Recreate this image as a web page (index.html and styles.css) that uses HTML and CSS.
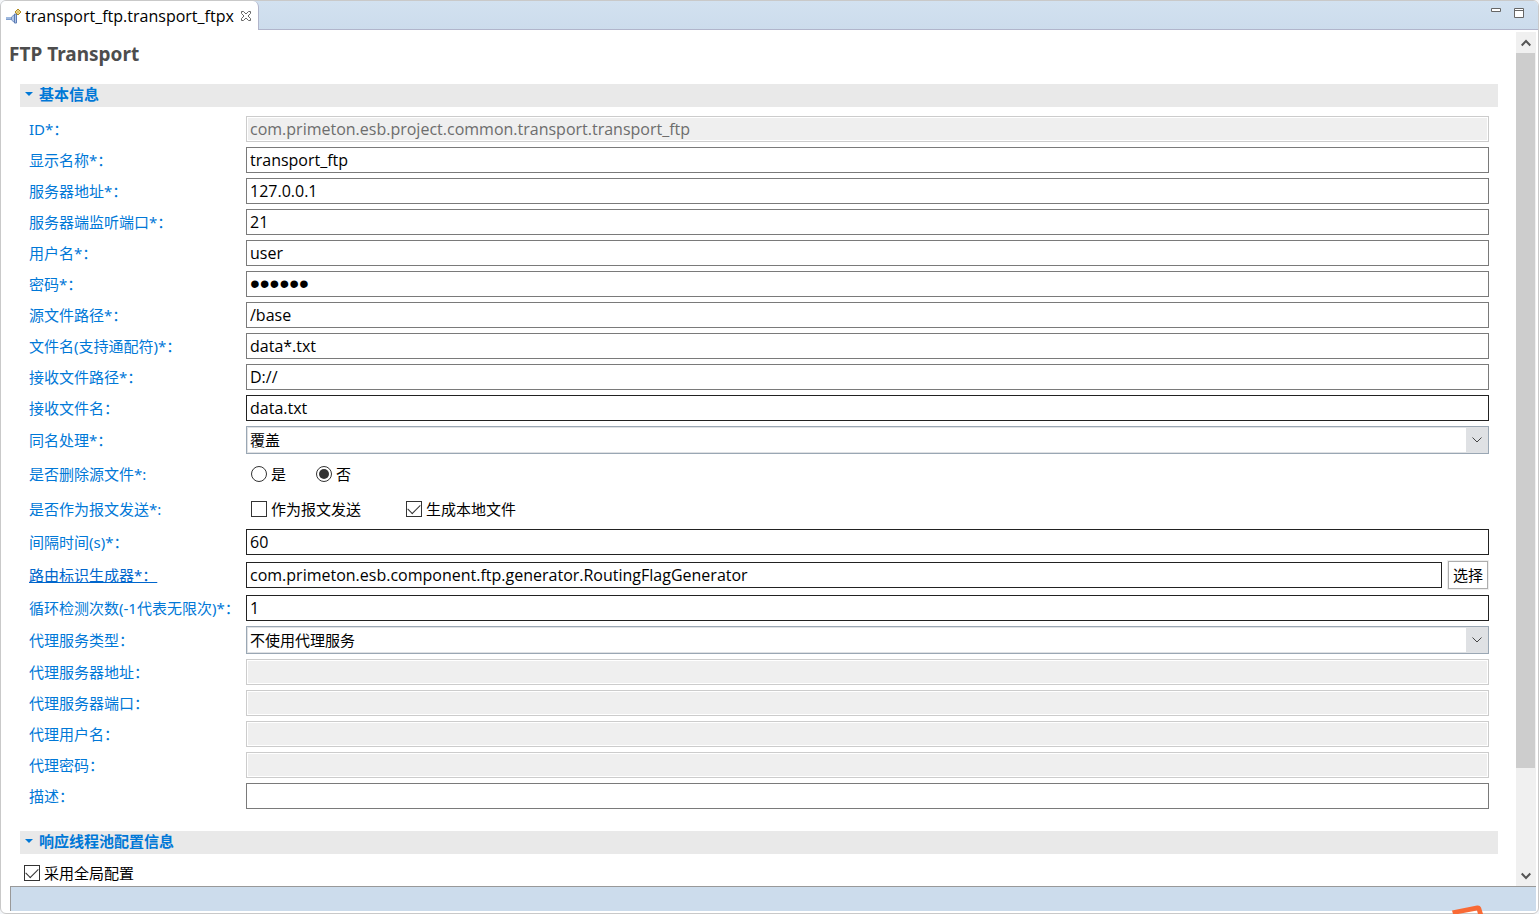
FILE: index.html
```
<!DOCTYPE html>
<html lang="zh-CN">
<head>
    <meta charset="UTF-8">
    <meta name="viewport" content="width=device-width, initial-scale=1.0">
    <title>transport_ftp.transport_ftpx</title>
    <link rel="stylesheet" href="styles.css">
</head>
<body>
    <div class="window">
        <div class="tab-bar">
            <div class="tab">
                <svg class="tab-icon" width="16" height="16" viewBox="0 0 16 16">
                    <path d="M0 9h6v3h-6z" fill="#7d9dce"/>
                    <path d="M0 10h7" stroke="#c4d5ee"/>
                    <path d="M5.500 9L8.500 6.500V14.500L5.500 12z" fill="#b4c8e8" stroke="#7390c2"/>
                    <path d="M8.500 6h2v9h-2z" fill="#b4c8e8" stroke="#5c7cb4"/>
                    <path d="M12 1L15 4L12 7L9 4z" fill="#fff3c0" stroke="#b08a20"/>
                    <path d="M12 2v4M10 4h4" stroke="#d5b652"/>
                </svg>
                <span class="tab-title">transport_ftp.transport_ftpx</span>
                <button class="icon-button" aria-label="关闭">
                    <svg width="12" height="12" viewBox="0 0 12 12">
                        <path d="M1.500 1.500h2L6 4l2.500-2.500h2v2L8 6l2.500 2.500v2h-2L6 8l-2.500 2.500h-2v-2L4 6L1.500 3.500z" fill="#fff" stroke="#666"/>
                    </svg>
                </button>
            </div>
            <div class="window-buttons">
                <button class="icon-button" aria-label="最小化">
                    <svg width="10" height="10" viewBox="0 0 10 10"><path d="M.5 .5h9v3h-9z" fill="#fff" stroke="#666"/></svg>
                </button>
                <button class="icon-button" aria-label="最大化">
                    <svg width="10" height="10" viewBox="0 0 10 10"><path d="M.5 .5h9v9h-9zM.5 2.500h9" fill="#fff" stroke="#666"/></svg>
                </button>
            </div>
        </div>

        <div class="editor">
            <main class="form-area">
                <h1>FTP Transport</h1>

                <h2 class="section-title"><svg width="8" height="4" viewBox="0 0 8 4"><path d="M0 0h8L4 4z" fill="#0078d7"/></svg>基本信息</h2>
                <form class="fields">
                    <label for="id">ID*：</label>
                    <input class="text" id="id" type="text" value="com.primeton.esb.project.common.transport.transport_ftp" disabled>

                    <label for="displayName">显示名称*：</label>
                    <input class="text" id="displayName" type="text" value="transport_ftp">

                    <label for="host">服务器地址*：</label>
                    <input class="text" id="host" type="text" value="127.0.0.1">

                    <label for="port">服务器端监听端口*：</label>
                    <input class="text" id="port" type="text" value="21">

                    <label for="user">用户名*：</label>
                    <input class="text" id="user" type="text" value="user">

                    <label for="password">密码*：</label>
                    <input class="text" id="password" type="password" value="000000">

                    <label for="sourcePath">源文件路径*：</label>
                    <input class="text" id="sourcePath" type="text" value="/base">

                    <label for="fileName">文件名(支持通配符)*：</label>
                    <input class="text" id="fileName" type="text" value="data*.txt">

                    <label for="receivePath">接收文件路径*：</label>
                    <input class="text" id="receivePath" type="text" value="D://">

                    <label for="receiveName">接收文件名：</label>
                    <input class="text dark" id="receiveName" type="text" value="data.txt">

                    <label for="sameName">同名处理*：</label>
                    <div class="combo">
                        <select id="sameName"><option>覆盖</option></select>
                        <span class="combo-arrow"><svg width="10" height="6" viewBox="0 0 10 6"><path d="M.5 .5L5 5L9.500 .5" fill="none" stroke="#444"/></svg></span>
                    </div>

                    <span class="row-label" id="deleteLabel">是否删除源文件*:</span>
                    <div class="options radios" role="radiogroup" aria-labelledby="deleteLabel">
                        <label><input type="radio" name="deleteSource">是</label>
                        <label><input type="radio" name="deleteSource" checked>否</label>
                    </div>

                    <span class="row-label" id="sendLabel">是否作为报文发送*:</span>
                    <div class="options checks" role="group" aria-labelledby="sendLabel">
                        <label><input type="checkbox">作为报文发送</label>
                        <label><input type="checkbox" checked>生成本地文件</label>
                    </div>

                    <label for="interval">间隔时间(s)*：</label>
                    <input class="text dark" id="interval" type="text" value="60">

                    <a class="row-link" id="routingLabel" href="#routing">路由标识生成器*：</a>
                    <div class="picker">
                        <input class="text dark" id="routing" type="text" aria-labelledby="routingLabel" value="com.primeton.esb.component.ftp.generator.RoutingFlagGenerator">
                        <button class="choose" type="button">选择</button>
                    </div>

                    <label for="loops">循环检测次数(-1代表无限次)*：</label>
                    <input class="text dark" id="loops" type="text" value="1">

                    <label for="proxyType">代理服务类型：</label>
                    <div class="combo">
                        <select id="proxyType"><option>不使用代理服务</option></select>
                        <span class="combo-arrow"><svg width="10" height="6" viewBox="0 0 10 6"><path d="M.5 .5L5 5L9.500 .5" fill="none" stroke="#444"/></svg></span>
                    </div>

                    <label for="proxyHost">代理服务器地址：</label>
                    <input class="text" id="proxyHost" type="text" disabled>

                    <label for="proxyPort">代理服务器端口：</label>
                    <input class="text" id="proxyPort" type="text" disabled>

                    <label for="proxyUser">代理用户名：</label>
                    <input class="text" id="proxyUser" type="text" disabled>

                    <label for="proxyPassword">代理密码：</label>
                    <input class="text" id="proxyPassword" type="password" disabled>

                    <label for="description">描述：</label>
                    <input class="text" id="description" type="text">
                </form>

                <h2 class="section-title"><svg width="8" height="4" viewBox="0 0 8 4"><path d="M0 0h8L4 4z" fill="#0078d7"/></svg>响应线程池配置信息</h2>
                <div class="options global">
                    <label><input type="checkbox" checked>采用全局配置</label>
                </div>
            </main>

            <div class="scrollbar">
                <button class="scroll-button" aria-label="向上滚动">
                    <svg width="10" height="8" viewBox="0 0 10 8"><path d="M.7 6.500L5 2L9.300 6.500" fill="none" stroke="#555" stroke-width="2"/></svg>
                </button>
                <div class="scroll-track"><div class="scroll-thumb"></div></div>
                <button class="scroll-button" aria-label="向下滚动">
                    <svg width="10" height="8" viewBox="0 0 10 8"><path d="M.7 1.500L5 6L9.300 1.500" fill="none" stroke="#555" stroke-width="2"/></svg>
                </button>
            </div>
        </div>

        <div class="page-tabs"></div>
    </div>
    <svg class="floating-logo" width="32" height="9" viewBox="0 0 32 9">
        <path d="M0 5.500L25 .5Q28 0 29 2.500L31 9H26L25 5.500L6 9H1z" fill="#f96a35"/>
    </svg>
</body>
</html>
```
FILE: styles.css
```
* {
    box-sizing: border-box;
}
body {
    margin: 0;
    height: 100vh;
    overflow: hidden;
    position: relative;
    background-color: #f4f6f9;
    color: #000;
    font-family: "Noto Sans", "Noto Sans CJK SC", sans-serif;
    font-size: 15px;
    line-height: 20px;
}
button,
input,
select {
    font: inherit;
    color: inherit;
}
.window {
    height: 100vh;
    display: flex;
    flex-direction: column;
    background-color: #fff;
    border: 1px solid #c9c9c9;
    border-radius: 6px;
    padding-bottom: 2px;
    overflow: hidden;
}

/* Tab strip */
.tab-bar {
    height: 29px;
    flex: none;
    display: flex;
    justify-content: space-between;
    background: linear-gradient(#d2e1f0, #ccdcec);
    box-shadow: inset 0 -1px #b1b5cb;
}
.tab {
    display: flex;
    align-items: center;
    padding: 0 6px 0 5px;
    background-color: #fff;
    border-right: 1px solid #b1b5cb;
    border-radius: 0 6px 0 0;
}
.tab-title {
    margin: 0 6px 0 3px;
    font-family: "Open Sans", sans-serif;
    font-size: 16px;
    white-space: nowrap;
}
.icon-button {
    display: flex;
    padding: 0;
    border: none;
    background: none;
}
.window-buttons {
    display: flex;
    align-items: flex-start;
    gap: 13px;
    padding: 7px 14px;
}

/* Form editor */
.editor {
    flex: 1;
    min-height: 0;
    display: flex;
}
.form-area {
    flex: 1;
    min-width: 0;
    overflow: hidden;
    padding: 12px 18px 0 19px;
}
h1 {
    margin: 0 0 18px -11px;
    font-size: 19px;
    line-height: 24px;
    color: #4d4d4d;
}
.section-title {
    display: flex;
    align-items: center;
    gap: 6px;
    height: 23px;
    margin: 0;
    padding: 0 0 3px 5px;
    background-color: #e9e9e9;
    color: #0078d7;
    font-size: 15px;
    line-height: 20px;
}
.fields {
    display: grid;
    grid-template-columns: 212px 1fr;
    column-gap: 5px;
    row-gap: 5px;
    align-items: center;
    padding: 9px 9px 22px;
}
.fields > label,
.row-label {
    color: #0078d7;
    white-space: nowrap;
}
.row-label {
    padding-bottom: 2px;
}
.row-link {
    color: #0066cc;
}
.text {
    width: 100%;
    height: 26px;
    padding: 0 3px;
    border: 1px solid #7a7a7a;
    border-radius: 0;
    background-color: #fff;
    font-family: "Open Sans", sans-serif;
    font-size: 16px;
}
.text[type="password"] {
    font-family: "Liberation Sans", sans-serif;
    font-size: 28px;
}
.text.dark {
    border-color: #222;
}
.text:disabled {
    border-color: #ccc;
    background-color: #efefef;
    box-shadow: inset 0 0 0 1px #fff;
    color: #6d6d6d;
}
.combo {
    display: flex;
    height: 28px;
    border: 1px solid #9aa7b4;
    box-shadow: inset 0 0 0 1px #dfe1e4;
}
.combo select {
    flex: 1;
    min-width: 0;
    padding: 0 3px;
    border: none;
    background: none;
    appearance: none;
}
.combo-arrow {
    width: 22px;
    display: flex;
    align-items: center;
    justify-content: center;
    background-color: #dfe1e4;
}
.options {
    display: flex;
    align-items: center;
    padding-left: 5px;
}
.options label {
    display: flex;
    align-items: center;
    gap: 4px;
}
.radios {
    height: 31px;
    gap: 30px;
    padding-bottom: 1px;
}
.checks {
    height: 29px;
    gap: 45px;
    padding-bottom: 1px;
}
.options input {
    appearance: none;
    width: 16px;
    height: 16px;
    margin: 0;
    display: grid;
    place-items: center;
    border: 1px solid #333;
    background-color: #fff;
}
.options input[type="radio"] {
    border-radius: 50%;
}
.options input[type="radio"]:checked::before {
    content: "";
    width: 10px;
    height: 10px;
    border-radius: 50%;
    background-color: #333;
}
.options input[type="checkbox"]:checked::before {
    content: "";
    width: 11px;
    height: 6px;
    margin-bottom: 3px;
    border-left: 1px solid #333;
    border-bottom: 1px solid #333;
    transform: rotate(-45deg);
}
.picker {
    display: flex;
    align-items: center;
    gap: 5px;
}
.picker .text {
    flex: 1;
    min-width: 0;
}
.choose {
    width: 42px;
    height: 30px;
    padding: 0;
    border: 1px solid #eee;
    box-shadow: inset 0 0 0 1px #adadad;
    background-color: #fff;
}
.global {
    padding: 9px 4px;
}

/* Scrollbar */
.scrollbar {
    width: 20px;
    flex: none;
    display: flex;
    flex-direction: column;
    margin: 2px 2px 0 0;
    background-color: #f0f0f0;
}
.scroll-button {
    height: 21px;
    display: flex;
    align-items: center;
    justify-content: center;
    padding: 0;
    border: none;
    background: none;
}
.scroll-track {
    flex: 1;
}
.scroll-thumb {
    width: 19px;
    height: 88%;
    background-color: #cdcdcd;
}

.page-tabs {
    height: 25px;
    flex: none;
    margin: 0 2px 0 9px;
    background-color: #ccdcec;
    border-top: 1px solid #999;
    border-left: 1px solid #999;
}
.floating-logo {
    position: absolute;
    right: 55px;
    bottom: 0;
}
```
